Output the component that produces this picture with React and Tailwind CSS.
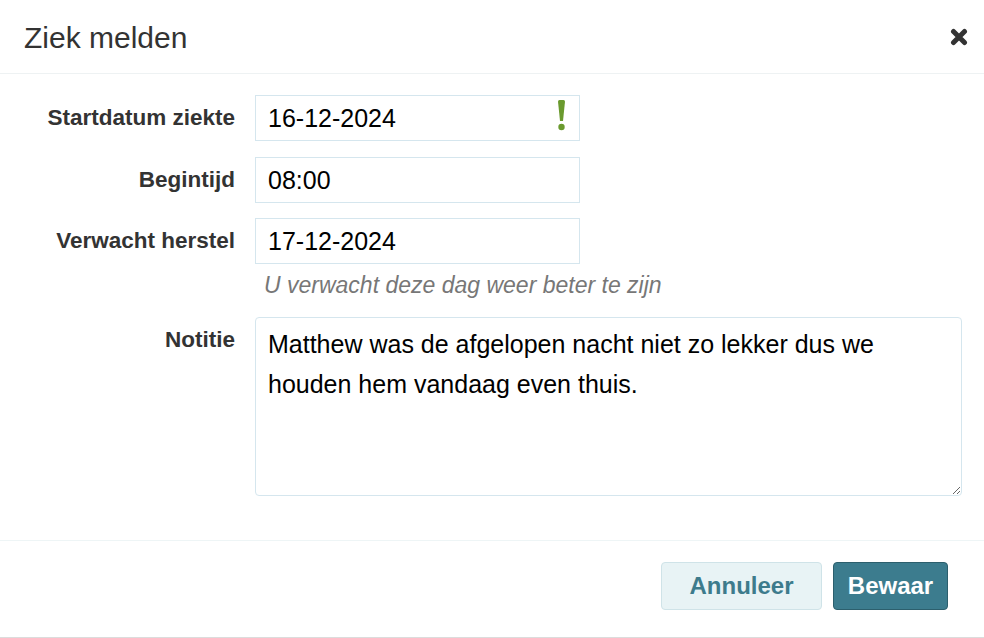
import React from "react";

const Field = ({ label, children, className = "" }) => (
  <div className={`flex items-start gap-5 ${className}`}>
    <label className="w-[235px] shrink-0 text-right font-bold text-[22.5px] leading-[26px] pt-[10px] text-[#333]">
      {label}
    </label>
    {children}
  </div>
);

const inputCls =
  "w-[325px] h-[46px] border border-[#d5e6ee] bg-white px-3 text-[25px] text-black outline-none";

export default function App() {
  return (
    <div className="w-[984px] h-[638px] bg-white flex flex-col font-['Liberation_Sans',Arial,sans-serif] text-[#333]">
      {/* header */}
      <div className="flex items-center justify-between h-[74px] shrink-0 pl-6 pr-[13px] border-b border-[#eef2f3]">
        <h2 className="text-[30px] leading-none text-[#333] pt-[2px]">Ziek melden</h2>
        <button className="w-6 h-6 flex items-center justify-center" aria-label="Sluiten">
          <svg width="18" height="18" viewBox="0 0 18 18">
            <path
              d="M3.5 3.5 L14.5 14.5 M14.5 3.5 L3.5 14.5"
              stroke="#333"
              strokeWidth="5"
              strokeLinecap="round"
            />
          </svg>
        </button>
      </div>

      {/* body */}
      <div className="flex flex-col pt-[21px] pb-[44px] pr-[22px]">
        <Field label="Startdatum ziekte">
          <div className="relative">
            <input className={inputCls} defaultValue="16-12-2024" readOnly />
            <svg
              className="absolute right-[14px] top-[5px]"
              width="9"
              height="31"
              viewBox="0 0 9 31"
            >
              <path d="M1 1.5 Q1 0 2.5 0 H6.5 Q8 0 8 1.5 L6 21 H3 Z" fill="#6a9a2e" />
              <circle cx="4.5" cy="27" r="3.2" fill="#6a9a2e" />
            </svg>
          </div>
        </Field>
        <Field label="Begintijd" className="mt-4">
          <input className={inputCls} defaultValue="08:00" readOnly />
        </Field>
        <Field label="Verwacht herstel" className="mt-[15px]">
          <div className="flex flex-col">
            <input className={inputCls} defaultValue="17-12-2024" readOnly />
            <p className="mt-2 pl-[9px] text-[23px] leading-[26px] italic text-[#777]">
              U verwacht deze dag weer beter te zijn
            </p>
          </div>
        </Field>
        <Field label="Notitie" className="mt-[19px]">
          <textarea
            className="flex-1 h-[179px] border border-[#d5e6ee] rounded px-3 pt-[6px] text-[25px] leading-[40px] text-black outline-none"
            defaultValue="Matthew was de afgelopen nacht niet zo lekker dus we houden hem vandaag even thuis."
            readOnly
          />
        </Field>
      </div>

      {/* footer */}
      <div className="flex justify-end gap-[11px] border-t border-[#eef5f6] pt-[21px] pb-[27px] pr-[36px] border-b-2 border-b-[#dcdcdc]">
        <button className="h-[48px] w-[161px] rounded bg-[#e8f3f5] border border-[#cfe3e8] text-[24px] font-bold text-[#3d7b8c]">
          Annuleer
        </button>
        <button className="h-[48px] w-[115px] rounded bg-[#3c7c8e] border border-[#2c5f6d] text-[24px] font-bold text-white">
          Bewaar
        </button>
      </div>
    </div>
  );
}
